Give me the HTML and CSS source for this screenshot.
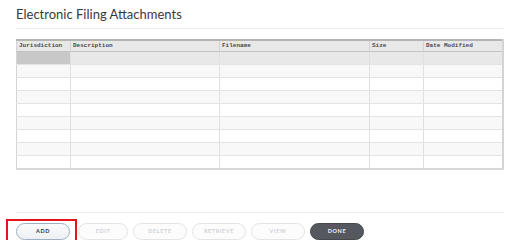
FILE: index.html
```html
<!DOCTYPE html>
<html lang="en">
<head>
  <meta charset="UTF-8">
  <title>Electronic Filing Attachments</title>
  <link rel="stylesheet" href="styles.css">
</head>
<body>
  <div class="page">
    <h1>Electronic Filing Attachments</h1>
    <hr class="rule">

    <table class="grid">
      <colgroup>
        <col style="width: 54px">
        <col style="width: 149px">
        <col style="width: 150px">
        <col style="width: 54px">
        <col>
      </colgroup>
      <thead>
        <tr>
          <th>Jurisdiction</th>
          <th>Description</th>
          <th>Filename</th>
          <th>Size</th>
          <th>Date Modified</th>
        </tr>
      </thead>
      <tbody>
        <tr class="selected"><td></td><td></td><td></td><td></td><td></td></tr>
        <tr><td></td><td></td><td></td><td></td><td></td></tr>
        <tr><td></td><td></td><td></td><td></td><td></td></tr>
        <tr><td></td><td></td><td></td><td></td><td></td></tr>
        <tr><td></td><td></td><td></td><td></td><td></td></tr>
        <tr><td></td><td></td><td></td><td></td><td></td></tr>
        <tr><td></td><td></td><td></td><td></td><td></td></tr>
        <tr><td></td><td></td><td></td><td></td><td></td></tr>
        <tr><td></td><td></td><td></td><td></td><td></td></tr>
      </tbody>
    </table>

    <hr class="rule bottom">

    <div class="actions">
      <span class="highlight-wrap">
        <button class="btn">ADD</button>
        <span class="highlight"></span>
      </span>
      <button class="btn edit" disabled>EDIT</button>
      <button class="btn" disabled>DELETE</button>
      <button class="btn" disabled>RETRIEVE</button>
      <button class="btn" disabled>VIEW</button>
      <button class="btn done">DONE</button>
    </div>
  </div>
</body>
</html>
```

FILE: styles.css
```css
* {
  margin: 0;
  padding: 0;
  box-sizing: border-box;
}

body {
  background: #fff;
  font-family: Lato, 'Open Sans', sans-serif;
  color: #333;
}

.page {
  width: 504px;
  padding-left: 16px;
}

h1 {
  font-size: 13px;
  font-weight: 400;
  line-height: 16px;
  padding-top: 6px;
  margin-bottom: 6px;
  color: #3a3a3a;
}

.rule {
  border: none;
  border-top: 1px solid #ececec;
  height: 0;
}

.rule.bottom {
  margin-top: 42px;
}

.grid {
  margin-top: 10px;
  width: 488px;
  table-layout: fixed;
  border-collapse: collapse;
  border-top: 2px solid #b4b4b4;
  border-left: 1px solid #d4d4d4;
  border-right: 2px solid #d4d4d4;
  border-bottom: 2px solid #d8d8d8;
}

.grid th {
  height: 11px;
  background: #e8e8e8;
  border-bottom: 1px solid #c4c4c4;
  border-right: 1px solid #d4d4d4;
  font-family: 'Liberation Mono', monospace;
  font-size: 6px;
  font-weight: 700;
  color: #4a4a4a;
  text-align: left;
  padding: 0 2px;
  line-height: 10px;
}

.grid td {
  height: 13px;
  border-bottom: 1px solid #e4e4e4;
  border-right: 1px solid #e0e0e0;
  background: #fff;
}

.grid tbody tr:nth-child(even) td {
  background: #f8f8f8;
}

.grid tr.selected td {
  background: #e8e8e8;
}

.grid tr.selected td:first-child {
  background: #c8c8c8;
}

.actions {
  display: flex;
  gap: 5px;
  margin-top: 10px;
}

.highlight-wrap {
  position: relative;
  display: flex;
  margin-right: 3px;
}

.highlight {
  position: absolute;
  left: -10px;
  right: -7px;
  top: -4px;
  bottom: -5px;
  border: 2px solid #e8141c;
}

.btn {
  width: 54px;
  height: 17px;
  border-radius: 9px;
  border: 1px solid #9fb0c4;
  background: linear-gradient(#fafbfc, #eef0f3);
  font-family: Lato, 'Open Sans', sans-serif;
  font-size: 5.5px;
  font-weight: 700;
  letter-spacing: 0.6px;
  color: #333;
}

.btn:disabled {
  border-color: #e2e4e7;
  background: #fcfcfd;
  color: #cfd2d6;
}

.btn.edit {
  width: 50px;
}

.btn.done {
  border-color: #44474c;
  background: #55585e;
  color: #f4f4f4;
}
```
